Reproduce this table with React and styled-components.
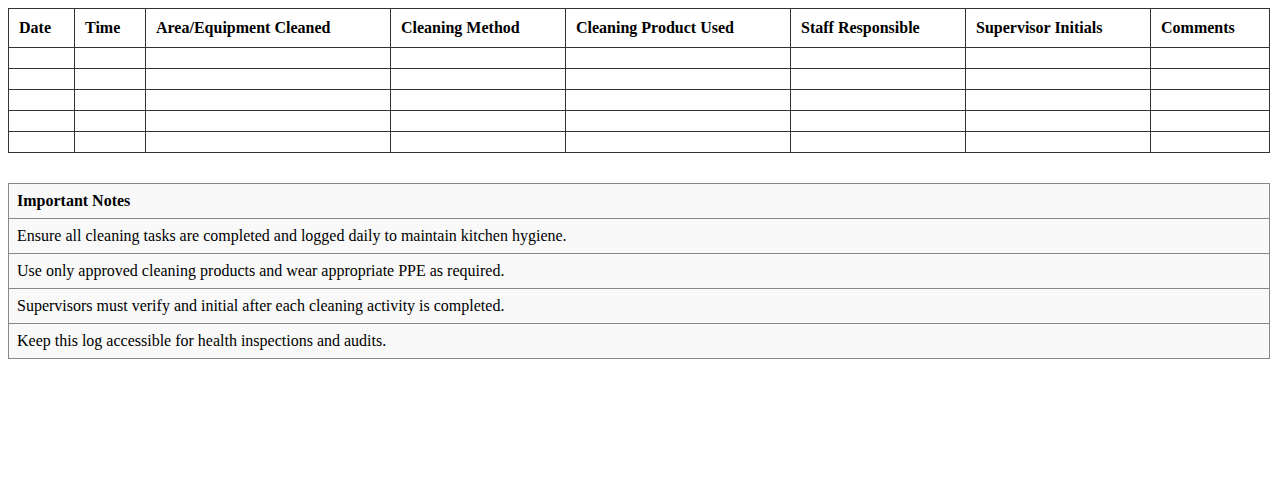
import styled, { createGlobalStyle } from "styled-components";

const GlobalStyle = createGlobalStyle`
  body {
    margin: 8px;
    font-family: "Liberation Serif", "Times New Roman", serif;
    font-size: 16px;
    color: #000;
    background: #fff;
  }
`;

const columns = [
  { label: "Date", width: 66 },
  { label: "Time", width: 71 },
  { label: "Area/Equipment Cleaned", width: 245 },
  { label: "Cleaning Method", width: 175 },
  { label: "Cleaning Product Used", width: 225 },
  { label: "Staff Responsible", width: 175 },
  { label: "Supervisor Initials", width: 185 },
  { label: "Comments" },
];

const notes = [
  "Ensure all cleaning tasks are completed and logged daily to maintain kitchen hygiene.",
  "Use only approved cleaning products and wear appropriate PPE as required.",
  "Supervisors must verify and initial after each cleaning activity is completed.",
  "Keep this log accessible for health inspections and audits.",
];

const App = () => {
  return (
    <>
      <GlobalStyle />
      <LogTable>
        <thead>
          <tr>
            {columns.map((c) => (
              <HeadCell key={c.label} $w={c.width}>
                {c.label}
              </HeadCell>
            ))}
          </tr>
        </thead>
        <tbody>
          {[0, 1, 2, 3, 4].map((r) => (
            <tr key={r}>
              {columns.map((c) => (
                <Cell key={c.label}></Cell>
              ))}
            </tr>
          ))}
        </tbody>
      </LogTable>

      <NotesTable>
        <tbody>
          <tr>
            <NoteCell $head>Important Notes</NoteCell>
          </tr>
          {notes.map((n) => (
            <tr key={n}>
              <NoteCell>{n}</NoteCell>
            </tr>
          ))}
        </tbody>
      </NotesTable>
    </>
  );
};

const LogTable = styled.table`
  width: 100%;
  border-collapse: collapse;
  table-layout: fixed;
`;

const HeadCell = styled.th`
  box-sizing: border-box;
  width: ${(p) => (p.$w ? `${p.$w}px` : "auto")};
  border: 1px solid #333;
  padding: 10px;
  text-align: left;
  font-weight: bold;
  line-height: 18px;
`;

const Cell = styled.td`
  border: 1px solid #333;
  padding: 10px;
  line-height: 0;
  height: 0;
`;

const NotesTable = styled.table`
  width: 100%;
  border-collapse: collapse;
  margin-top: 30px;
  background: #f9f9f9;
`;

const NoteCell = styled.td`
  border: 1px solid #888;
  padding: 8px;
  line-height: 18px;
  font-weight: ${(p) => (p.$head ? "bold" : "normal")};
`;

export default App;
